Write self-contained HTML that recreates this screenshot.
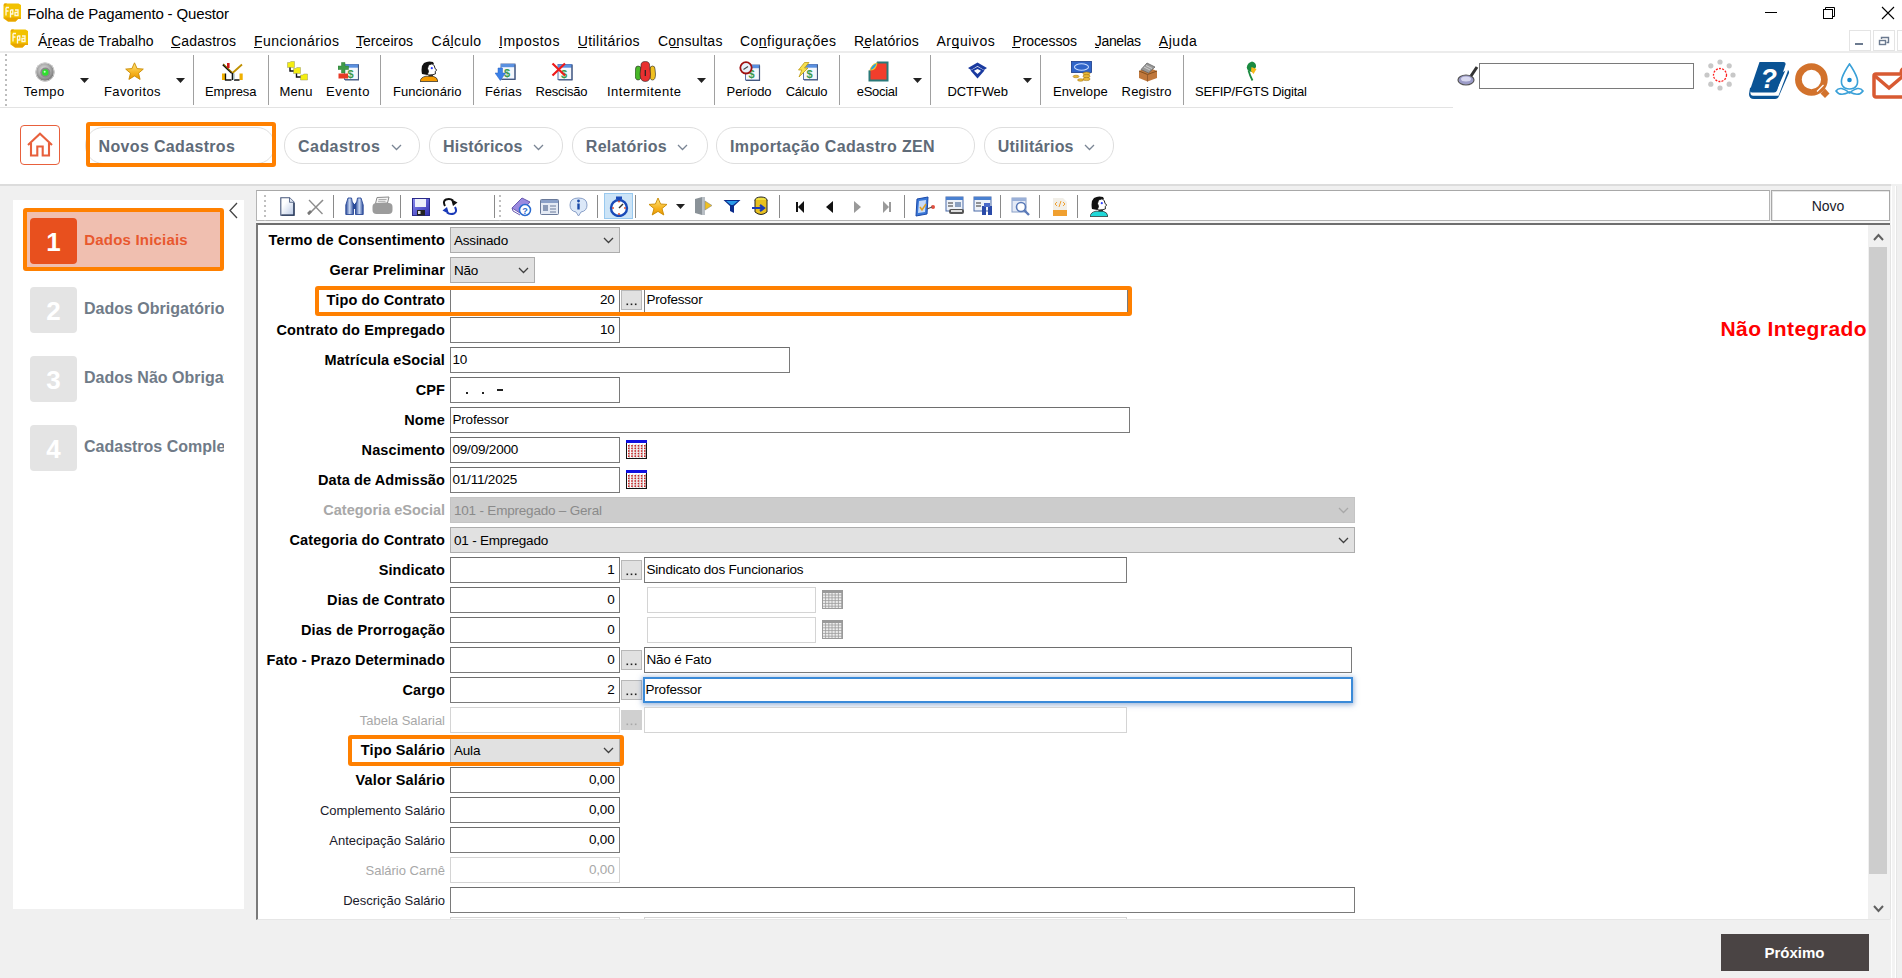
<!DOCTYPE html><html><head><meta charset="utf-8"><style>
html,body{margin:0;padding:0;width:1902px;height:978px;overflow:hidden;background:#f0f0f0}
body{position:relative;font-family:"Liberation Sans",sans-serif}
div{position:absolute;box-sizing:border-box}
svg{position:absolute}
</style></head><body>
<div style="left:0px;top:0px;width:1902px;height:978px;background:#f0f0f0"></div>
<div style="left:0px;top:0px;width:1902px;height:108px;background:#fff"></div>
<div style="left:0px;top:51px;width:1902px;height:2px;background:#ececec"></div>
<div style="left:0px;top:107px;width:1453px;height:1px;background:#e3e3e3"></div>
<div style="left:0px;top:108px;width:1902px;height:76px;background:#fff"></div>
<div style="left:0px;top:184px;width:1891px;height:2px;background:#dcdcdc"></div>
<svg style="position:absolute;left:3px;top:3px" width="19" height="19" viewBox="0 0 19 19"><path d="M1.5 0.5 H15.5 L18 2 V15.5 L15 16 L12.5 18.5 H5 L0.5 15.5 V2 Z" fill="#f2c200"/><path d="M0.5 14.5 L5 18.5 H12.5 L15 16 H18 V14.5 Z" fill="#e8a400"/><path d="M0.5 2 L1.5 0.5 H4 L2 3 Z" fill="#e8a400"/><path d="M3 4.5 V12.5 M3 4.5 H6 M3 8 H5.5 M7.5 7 V14.5 M7.5 7 H9.8 V11 H7.5 M12 7 H15 V12.5 H12 V9.5 H15" fill="none" stroke="#fff8e0" stroke-width="1.3"/></svg>
<div style="top:6.30px;font-size:15px;line-height:15px;font-weight:400;color:#000;white-space:nowrap;letter-spacing:-0.148px;left:27px;">Folha de Pagamento - Questor</div>
<div style="left:1765px;top:12px;width:12px;height:1px;background:#000"></div>
<svg style="position:absolute;left:1822px;top:6px" width="15" height="15" viewBox="0 0 15 15"><rect x="1.5" y="3.5" width="9" height="9" fill="none" stroke="#000"/><path d="M3.5 3.5 V1.5 H12.5 V10.5 H10.5" fill="none" stroke="#000"/></svg>
<svg style="position:absolute;left:1881px;top:6px" width="15" height="15" viewBox="0 0 15 15"><path d="M1 1 L13 13 M13 1 L1 13" stroke="#000" stroke-width="1.1"/></svg>
<svg style="position:absolute;left:10px;top:29px" width="19" height="19" viewBox="0 0 19 19"><path d="M1.5 0.5 H15.5 L18 2 V15.5 L15 16 L12.5 18.5 H5 L0.5 15.5 V2 Z" fill="#f2c200"/><path d="M0.5 14.5 L5 18.5 H12.5 L15 16 H18 V14.5 Z" fill="#e8a400"/><path d="M0.5 2 L1.5 0.5 H4 L2 3 Z" fill="#e8a400"/><path d="M3 4.5 V12.5 M3 4.5 H6 M3 8 H5.5 M7.5 7 V14.5 M7.5 7 H9.8 V11 H7.5 M12 7 H15 V12.5 H12 V9.5 H15" fill="none" stroke="#fff8e0" stroke-width="1.3"/></svg>
<div style="top:33.65px;font-size:14px;line-height:14px;font-weight:400;color:#000;white-space:nowrap;letter-spacing:0.071px;left:38px;">Áreas de Trabalho</div>
<div style="top:33.65px;font-size:14px;line-height:14px;font-weight:400;color:#000;white-space:nowrap;letter-spacing:0.152px;left:171px;">Cadastros</div>
<div style="top:33.65px;font-size:14px;line-height:14px;font-weight:400;color:#000;white-space:nowrap;letter-spacing:0.445px;left:254px;">Funcionários</div>
<div style="top:33.65px;font-size:14px;line-height:14px;font-weight:400;color:#000;white-space:nowrap;letter-spacing:0.029px;left:356px;">Terceiros</div>
<div style="top:33.65px;font-size:14px;line-height:14px;font-weight:400;color:#000;white-space:nowrap;letter-spacing:0.455px;left:431.6px;">Cálculo</div>
<div style="top:33.65px;font-size:14px;line-height:14px;font-weight:400;color:#000;white-space:nowrap;letter-spacing:0.517px;left:499px;">Impostos</div>
<div style="top:33.65px;font-size:14px;line-height:14px;font-weight:400;color:#000;white-space:nowrap;letter-spacing:0.435px;left:577.7px;">Utilitários</div>
<div style="top:33.65px;font-size:14px;line-height:14px;font-weight:400;color:#000;white-space:nowrap;letter-spacing:0.283px;left:657.9px;">Consultas</div>
<div style="top:33.65px;font-size:14px;line-height:14px;font-weight:400;color:#000;white-space:nowrap;letter-spacing:0.480px;left:740px;">Configurações</div>
<div style="top:33.65px;font-size:14px;line-height:14px;font-weight:400;color:#000;white-space:nowrap;letter-spacing:0.178px;left:854px;">Relatórios</div>
<div style="top:33.65px;font-size:14px;line-height:14px;font-weight:400;color:#000;white-space:nowrap;letter-spacing:0.535px;left:936.5px;">Arquivos</div>
<div style="top:33.65px;font-size:14px;line-height:14px;font-weight:400;color:#000;white-space:nowrap;letter-spacing:-0.093px;left:1012.4px;">Processos</div>
<div style="top:33.65px;font-size:14px;line-height:14px;font-weight:400;color:#000;white-space:nowrap;letter-spacing:-0.339px;left:1094.8px;">Janelas</div>
<div style="top:33.65px;font-size:14px;line-height:14px;font-weight:400;color:#000;white-space:nowrap;letter-spacing:0.551px;left:1158.8px;">Ajuda</div>
<div style="left:47px;top:47px;width:5px;height:1px;background:#000"></div>
<div style="left:171px;top:47px;width:9px;height:1px;background:#000"></div>
<div style="left:254px;top:47px;width:8px;height:1px;background:#000"></div>
<div style="left:356px;top:47px;width:6px;height:1px;background:#000"></div>
<div style="left:450px;top:47px;width:3px;height:1px;background:#000"></div>
<div style="left:499px;top:47px;width:3px;height:1px;background:#000"></div>
<div style="left:578px;top:47px;width:9px;height:1px;background:#000"></div>
<div style="left:670px;top:47px;width:9px;height:1px;background:#000"></div>
<div style="left:759px;top:47px;width:8px;height:1px;background:#000"></div>
<div style="left:863px;top:47px;width:7px;height:1px;background:#000"></div>
<div style="left:952px;top:47px;width:7px;height:1px;background:#000"></div>
<div style="left:1012px;top:47px;width:8px;height:1px;background:#000"></div>
<div style="left:1095px;top:47px;width:4px;height:1px;background:#000"></div>
<div style="left:1159px;top:47px;width:9px;height:1px;background:#000"></div>
<div style="left:1849px;top:30px;width:22px;height:21px;border:1px solid #e4e4e4;background:#fff"></div>
<div style="left:1855px;top:43px;width:8px;height:2px;background:#6b7a8f"></div>
<div style="left:1873px;top:30px;width:22px;height:21px;border:1px solid #e4e4e4;background:#fff"></div>
<svg style="position:absolute;left:1878px;top:35px" width="12" height="12" viewBox="0 0 12 12"><rect x="1.5" y="5.5" width="6" height="4" fill="none" stroke="#6b7a8f" stroke-width="1.4"/><path d="M3.5 4 V2.5 H10.5 V7.5 H8.5" fill="none" stroke="#6b7a8f" stroke-width="1.4"/></svg>
<div style="left:1897px;top:30px;width:6px;height:21px;border:1px solid #e4e4e4;background:#fff"></div>
<div style="left:5px;top:54px;width:2px;height:2px;background:#bdbdbd"></div>
<div style="left:5px;top:59px;width:2px;height:2px;background:#bdbdbd"></div>
<div style="left:5px;top:64px;width:2px;height:2px;background:#bdbdbd"></div>
<div style="left:5px;top:69px;width:2px;height:2px;background:#bdbdbd"></div>
<div style="left:5px;top:74px;width:2px;height:2px;background:#bdbdbd"></div>
<div style="left:5px;top:79px;width:2px;height:2px;background:#bdbdbd"></div>
<div style="left:5px;top:84px;width:2px;height:2px;background:#bdbdbd"></div>
<div style="left:5px;top:89px;width:2px;height:2px;background:#bdbdbd"></div>
<div style="left:5px;top:94px;width:2px;height:2px;background:#bdbdbd"></div>
<div style="left:5px;top:99px;width:2px;height:2px;background:#bdbdbd"></div>
<div style="left:5px;top:104px;width:2px;height:2px;background:#bdbdbd"></div>
<div style="left:193px;top:55px;width:1px;height:50px;background:#a0a0a0"></div>
<div style="left:268px;top:55px;width:1px;height:50px;background:#a0a0a0"></div>
<div style="left:380px;top:55px;width:1px;height:50px;background:#a0a0a0"></div>
<div style="left:473px;top:55px;width:1px;height:50px;background:#a0a0a0"></div>
<div style="left:714px;top:55px;width:1px;height:50px;background:#a0a0a0"></div>
<div style="left:839px;top:55px;width:1px;height:50px;background:#a0a0a0"></div>
<div style="left:930px;top:55px;width:1px;height:50px;background:#a0a0a0"></div>
<div style="left:1040px;top:55px;width:1px;height:50px;background:#a0a0a0"></div>
<div style="left:1183px;top:55px;width:1px;height:50px;background:#a0a0a0"></div>
<div style="top:84.80px;font-size:13px;line-height:13px;font-weight:400;color:#000;white-space:nowrap;letter-spacing:0.367px;left:23.7px;">Tempo</div>
<div style="top:84.80px;font-size:13px;line-height:13px;font-weight:400;color:#000;white-space:nowrap;letter-spacing:0.379px;left:104px;">Favoritos</div>
<div style="top:84.80px;font-size:13px;line-height:13px;font-weight:400;color:#000;white-space:nowrap;letter-spacing:-0.089px;left:205px;">Empresa</div>
<div style="top:84.80px;font-size:13px;line-height:13px;font-weight:400;color:#000;white-space:nowrap;letter-spacing:0.156px;left:279.5px;">Menu</div>
<div style="top:84.80px;font-size:13px;line-height:13px;font-weight:400;color:#000;white-space:nowrap;letter-spacing:0.603px;left:326px;">Evento</div>
<div style="top:84.80px;font-size:13px;line-height:13px;font-weight:400;color:#000;white-space:nowrap;letter-spacing:0.055px;left:393px;">Funcionário</div>
<div style="top:84.80px;font-size:13px;line-height:13px;font-weight:400;color:#000;white-space:nowrap;letter-spacing:0.115px;left:485px;">Férias</div>
<div style="top:84.80px;font-size:13px;line-height:13px;font-weight:400;color:#000;white-space:nowrap;letter-spacing:-0.212px;left:535.5px;">Rescisão</div>
<div style="top:84.80px;font-size:13px;line-height:13px;font-weight:400;color:#000;white-space:nowrap;letter-spacing:0.486px;left:607px;">Intermitente</div>
<div style="top:84.80px;font-size:13px;line-height:13px;font-weight:400;color:#000;white-space:nowrap;letter-spacing:-0.108px;left:726.6px;">Período</div>
<div style="top:84.80px;font-size:13px;line-height:13px;font-weight:400;color:#000;white-space:nowrap;letter-spacing:-0.263px;left:785.7px;">Cálculo</div>
<div style="top:84.80px;font-size:13px;line-height:13px;font-weight:400;color:#000;white-space:nowrap;letter-spacing:-0.276px;left:856.7px;">eSocial</div>
<div style="top:84.80px;font-size:13px;line-height:13px;font-weight:400;color:#000;white-space:nowrap;letter-spacing:-0.093px;left:947.4px;">DCTFWeb</div>
<div style="top:84.80px;font-size:13px;line-height:13px;font-weight:400;color:#000;white-space:nowrap;letter-spacing:0.067px;left:1053px;">Envelope</div>
<div style="top:84.80px;font-size:13px;line-height:13px;font-weight:400;color:#000;white-space:nowrap;letter-spacing:0.240px;left:1121.5px;">Registro</div>
<div style="top:84.80px;font-size:13px;line-height:13px;font-weight:400;color:#000;white-space:nowrap;letter-spacing:-0.210px;left:1195px;">SEFIP/FGTS Digital</div>
<svg style="position:absolute;left:80px;top:78px" width="10" height="6" viewBox="0 0 10 6"><path d="M0 0 H9 L4.5 5 Z" fill="#222"/></svg>
<svg style="position:absolute;left:176px;top:78px" width="10" height="6" viewBox="0 0 10 6"><path d="M0 0 H9 L4.5 5 Z" fill="#222"/></svg>
<svg style="position:absolute;left:697px;top:78px" width="10" height="6" viewBox="0 0 10 6"><path d="M0 0 H9 L4.5 5 Z" fill="#222"/></svg>
<svg style="position:absolute;left:913px;top:78px" width="10" height="6" viewBox="0 0 10 6"><path d="M0 0 H9 L4.5 5 Z" fill="#222"/></svg>
<svg style="position:absolute;left:1023px;top:78px" width="10" height="6" viewBox="0 0 10 6"><path d="M0 0 H9 L4.5 5 Z" fill="#222"/></svg>
<svg style="position:absolute;left:35px;top:62px" width="20" height="20" viewBox="0 0 20 20"><defs><radialGradient id="gr1" cx="0.45" cy="0.4" r="0.6"><stop offset="0" stop-color="#e8e8e8"/><stop offset="0.5" stop-color="#b0b0b0"/><stop offset="1" stop-color="#707070"/></radialGradient></defs><circle cx="10" cy="10" r="9.6" fill="url(#gr1)"/><circle cx="10" cy="10" r="9.2" fill="none" stroke="#d8d8d8" stroke-width="1"/><circle cx="10.3" cy="10.5" r="5" fill="#8a8a8a"/><circle cx="10.3" cy="10.5" r="3.2" fill="#30e030"/><circle cx="9.7" cy="9.8" r="1" fill="#c8ffc8"/></svg>
<svg style="position:absolute;left:125px;top:62px" width="19" height="18" viewBox="0 0 19 18"><defs><linearGradient id="stg" x1="0" y1="0" x2="0" y2="1"><stop offset="0" stop-color="#ffe680"/><stop offset="0.6" stop-color="#f6b420"/><stop offset="1" stop-color="#e89400"/></linearGradient></defs><path d="M9.5 0.8 L12.1 6.6 L18.3 7.1 L13.5 11.2 L15.1 17.4 L9.5 14 L3.9 17.4 L5.5 11.2 L0.7 7.1 L6.9 6.6 Z" fill="url(#stg)" stroke="#c88a00" stroke-width="0.9" stroke-linejoin="round"/></svg>
<svg style="position:absolute;left:222px;top:63px" width="21" height="18" viewBox="0 0 21 18"><path d="M1 1.5 L10 10" stroke="#111" stroke-width="2.2"/><path d="M1.5 1 L10 9.3" stroke="#d8a800" stroke-width="1"/><path d="M20 1.5 L10.5 10" stroke="#c09000" stroke-width="1.8"/><rect x="5" y="0" width="2.6" height="5" fill="#d01818"/><path d="M10.5 10 V17" stroke="#111" stroke-width="1.6"/><rect x="0" y="10.5" width="3.2" height="6.5" fill="#f0b000"/><rect x="17.5" y="10.5" width="3.2" height="6.5" fill="#f0b000"/><path d="M3.5 10.5 V17 H9.5 M12 17 H17.5" fill="none" stroke="#111" stroke-width="1.3"/><path d="M12 10.5 V17" stroke="#8ab0b8" stroke-width="1"/></svg>
<svg style="position:absolute;left:287px;top:61px" width="21" height="20" viewBox="0 0 21 20"><path d="M0.5 1.5 H3.0 L3.7 0.5 H7.5 V6.5 H0.5 Z" fill="#f4ee10" stroke="#9a9a60" stroke-width="0.5"/><path d="M6.5 7.5 H9.0 L9.7 6.5 H13.5 V12.5 H6.5 Z" fill="#f4ee10" stroke="#9a9a60" stroke-width="0.5"/><path d="M13.5 14 H16.0 L16.7 13 H20.5 V19 H13.5 Z" fill="#f4ee10" stroke="#9a9a60" stroke-width="0.5"/><path d="M3 6.5 V10 H6.5 M9.5 12.5 V16 H13.5" fill="none" stroke="#111" stroke-width="1.4"/></svg>
<svg style="position:absolute;left:338px;top:62px" width="21" height="19" viewBox="0 0 21 19"><g transform="translate(6,2)"><rect x="0.5" y="0.5" width="14" height="15" fill="#f4f7fc" stroke="#5a72a8" stroke-width="1"/><rect x="0.5" y="0.5" width="14" height="3.2" fill="#5a90e0"/><path d="M14.5 1 V16 H1" fill="none" stroke="#44587e" stroke-width="1.2"/><text x="3.6" y="13.8" font-size="11" font-weight="700" fill="#3a9a50" font-family="Liberation Sans">$</text></g><path d="M3.5 0.5 H7 V4 H10.5 V7.5 H7 V11 H3.5 V7.5 H0 V4 H3.5 Z" fill="#3e9a48" stroke="#2a7a32" stroke-width="0.5"/><rect x="0.5" y="11.5" width="9.5" height="5" fill="#e83a26"/></svg>
<svg style="position:absolute;left:420px;top:61px" width="18" height="21" viewBox="0 0 18 21"><path d="M2 13 Q0.5 5 4 2 Q8 -0.5 13 1 L14 3 L10 4.5 L8.5 8 L9.5 11 L7.5 14 Z" fill="#111"/><path d="M8.5 4 L12 2.8 L14.3 4.6 L15 7.5 L16.8 9 L15.2 10.5 L15.5 12.8 L12.5 13.8 L9 14.5 L7.5 13 L8.5 10.5 L7.5 7.5 Z" fill="#fff" stroke="#111" stroke-width="0.9"/><circle cx="11.8" cy="7.2" r="1.1" fill="#3040ff"/><path d="M8.5 13.5 H13 V16 H8.5 Z" fill="#333"/><path d="M0 20.5 Q0.8 16 6 15.2 H13 Q17.3 16 18 20.5 Z" fill="#f49a00" stroke="#222" stroke-width="0.7"/></svg>
<svg style="position:absolute;left:495px;top:62px" width="21" height="20" viewBox="0 0 21 20"><g transform="translate(5.5,1.5)"><rect x="0.5" y="0.5" width="14" height="15" fill="#f4f7fc" stroke="#5a72a8" stroke-width="1"/><rect x="0.5" y="0.5" width="14" height="3.2" fill="#5a90e0"/><path d="M14.5 1 V16 H1" fill="none" stroke="#44587e" stroke-width="1.2"/><text x="3.6" y="13.8" font-size="11" font-weight="700" fill="#3a9a50" font-family="Liberation Sans">$</text></g><path d="M3 6 H7.5 V11 H10.5 L5.3 18.5 L0 11 H3 Z" fill="#3a80e8" stroke="#2a60c0" stroke-width="0.5"/></svg>
<svg style="position:absolute;left:551px;top:62px" width="22" height="19" viewBox="0 0 22 19"><g transform="translate(6.5,2)"><rect x="0.5" y="0.5" width="14" height="15" fill="#f4f7fc" stroke="#5a72a8" stroke-width="1"/><rect x="0.5" y="0.5" width="14" height="3.2" fill="#5a90e0"/><path d="M14.5 1 V16 H1" fill="none" stroke="#44587e" stroke-width="1.2"/><text x="3.6" y="13.8" font-size="11" font-weight="700" fill="#3a9a50" font-family="Liberation Sans">$</text></g><path d="M1.5 1.5 L14 13.5 M14 1.5 L1.5 13.5" stroke="#ee1a1a" stroke-width="2.2"/></svg>
<svg style="position:absolute;left:635px;top:61px" width="21" height="21" viewBox="0 0 21 21"><path d="M3 5 Q6 5 6 8 L6.5 13 Q6.5 19 3 19 Q0 19 0 13 L0.5 8 Q0.5 5 3 5 Z" fill="#48b828" stroke="#222" stroke-width="0.6"/><path d="M17.5 5 Q20 5 20 8 L20.5 13 Q20.5 19 17.5 19 Q14.5 19 14.5 13 L15 8 Q15 5 17.5 5 Z" fill="#f0c020" stroke="#222" stroke-width="0.6"/><path d="M10.3 0.5 Q15 0.5 14.6 5 L15.5 13 Q15.5 20.5 10.3 20.5 Q5 20.5 5 13 L6 5 Q5.5 0.5 10.3 0.5 Z" fill="#e83030" stroke="#222" stroke-width="0.6"/><path d="M10.3 9 V15" stroke="#222" stroke-width="1.2"/></svg>
<svg style="position:absolute;left:739px;top:61px" width="22" height="20" viewBox="0 0 22 20"><g transform="translate(6,3.5)"><rect x="0.5" y="0.5" width="14" height="15" fill="#f4f7fc" stroke="#5a72a8" stroke-width="1"/><rect x="0.5" y="0.5" width="14" height="3.2" fill="#5a90e0"/><path d="M14.5 1 V16 H1" fill="none" stroke="#44587e" stroke-width="1.2"/><text x="3.6" y="13.8" font-size="11" font-weight="700" fill="#3a9a50" font-family="Liberation Sans">$</text></g><circle cx="7" cy="6.8" r="5.7" fill="#e8f0fa" stroke="#a01010" stroke-width="1.8"/><path d="M4.5 8.5 L9 5.5" stroke="#444" stroke-width="1.1"/></svg>
<svg style="position:absolute;left:797px;top:62px" width="21" height="19" viewBox="0 0 21 19"><g transform="translate(6,2)"><rect x="0.5" y="0.5" width="14" height="15" fill="#f4f7fc" stroke="#5a72a8" stroke-width="1"/><rect x="0.5" y="0.5" width="14" height="3.2" fill="#5a90e0"/><path d="M14.5 1 V16 H1" fill="none" stroke="#44587e" stroke-width="1.2"/><text x="3.6" y="13.8" font-size="11" font-weight="700" fill="#3a9a50" font-family="Liberation Sans">$</text></g><path d="M7.5 0.5 H12 L7.5 6 H11 L2 15 L4.8 8 H1.5 Z" fill="#f6e050" stroke="#b89000" stroke-width="0.7"/></svg>
<svg style="position:absolute;left:868px;top:61px" width="21" height="21" viewBox="0 0 21 21"><rect x="0.5" y="0.5" width="20" height="20" fill="#2a7a7a"/><rect x="2.5" y="2.5" width="16" height="16" fill="#f23e2c"/><path d="M0 0 H9 Q8 5 6 8 Q3 9 0 9.5 Z" fill="#fff"/><path d="M1.5 9.5 Q3 3 9.5 1.5 Q9 6 7 8 Q4.5 9.5 1.5 9.5 Z" fill="#f6c820"/><path d="M2.5 9 Q3.5 4 8.5 2.5 Q7.5 6 6 7 Q4 8.5 2.5 9 Z" fill="#2aa0e0"/></svg>
<svg style="position:absolute;left:968px;top:62px" width="20" height="17" viewBox="0 0 20 17"><path d="M9.5 0.5 L19 6 L16 8 L9.5 4 L3 8 L0 6 Z" fill="#1a3aa0"/><path d="M2.5 8.5 L9.5 4.8 L16.5 8.5 L9.5 16.5 Z" fill="#1a3aa0"/><path d="M6 8.8 L9.5 7 L13 8.8 L9.5 12 Z" fill="#fff"/></svg>
<svg style="position:absolute;left:1071px;top:61px" width="21" height="21" viewBox="0 0 21 21"><rect x="0.5" y="0.5" width="20" height="11" fill="#2f64c8" stroke="#1a3a88" stroke-width="0.8"/><ellipse cx="10.5" cy="6" rx="7" ry="3.2" fill="none" stroke="#c8dcff" stroke-width="1.1"/><ellipse cx="15.5" cy="12.5" rx="3.6" ry="1.6" fill="#e8b838" stroke="#9a7010" stroke-width="0.5"/><ellipse cx="15.5" cy="15.2" rx="3.6" ry="1.6" fill="#e8b838" stroke="#9a7010" stroke-width="0.5"/><ellipse cx="15.5" cy="18" rx="3.6" ry="1.6" fill="#e8b838" stroke="#9a7010" stroke-width="0.5"/><ellipse cx="5" cy="15.5" rx="3" ry="1.3" fill="#e8b838" stroke="#9a7010" stroke-width="0.5"/><ellipse cx="9.5" cy="19" rx="3" ry="1.3" fill="#e8b838" stroke="#9a7010" stroke-width="0.5"/></svg>
<svg style="position:absolute;left:1138px;top:62px" width="20" height="20" viewBox="0 0 20 20"><path d="M1 9 L9.5 5 L19 9 V16 L9.5 19.5 L1 16 Z" fill="#c0783c"/><path d="M1 9 L9.5 12.5 L19 9" fill="none" stroke="#7a4a1a" stroke-width="0.9"/><path d="M9.5 12.5 V19.5" stroke="#8a5428" stroke-width="0.8"/><path d="M3 7.5 L9 1 L17 5 L10.5 11 Z" fill="#9a9a9a" stroke="#5a5a5a" stroke-width="0.7"/><path d="M6 5 L12 8 M8 3.5 L14 6.5" stroke="#ddd" stroke-width="0.8"/></svg>
<svg style="position:absolute;left:1246px;top:61px" width="11" height="20" viewBox="0 0 11 20"><path d="M6 0.5 Q10.5 1.5 10 6 L8 9 L5.5 11 Q1 10 0.8 6.5 Q1 2 6 0.5 Z" fill="#1a8a40"/><path d="M5.5 6 L10.5 8 L7.5 13 L5 10 Z" fill="#f6b818"/><path d="M2.5 9.5 Q4 15 6.5 19.5" stroke="#1a8a40" stroke-width="1.8" fill="none"/></svg>
<svg style="position:absolute;left:1456px;top:64px" width="24" height="24" viewBox="0 0 24 24"><ellipse cx="10" cy="16" rx="8" ry="5" fill="#9c9cc8" stroke="#555" stroke-width="1.2"/><ellipse cx="10" cy="15" rx="5" ry="2.5" fill="#d8d8f0"/><path d="M15 12 L21 3" stroke="#333" stroke-width="3"/></svg>
<div style="left:1479px;top:63px;width:215px;height:26px;border:1px solid #7a7a7a;background:#fff"></div>
<svg style="position:absolute;left:1704px;top:59px" width="32" height="32" viewBox="0 0 32 32"><circle cx="29.0" cy="16.0" r="2.6" fill="#c8c8c8"/><circle cx="25.2" cy="25.2" r="2.6" fill="#c8c8c8"/><circle cx="16.0" cy="29.0" r="2.6" fill="#c8c8c8"/><circle cx="6.8" cy="25.2" r="2.6" fill="#c8c8c8"/><circle cx="3.0" cy="16.0" r="2.6" fill="#c8c8c8"/><circle cx="6.8" cy="6.8" r="2.6" fill="#c8c8c8"/><circle cx="16.0" cy="3.0" r="2.6" fill="#c8c8c8"/><circle cx="25.2" cy="6.8" r="2.6" fill="#c8c8c8"/><circle cx="16" cy="16" r="6.5" fill="none" stroke="#ff2020" stroke-width="1.3" stroke-dasharray="2 1.2"/></svg>
<svg style="position:absolute;left:1748px;top:61px" width="42" height="39" viewBox="0 0 42 39"><path d="M2 27 L1 33 Q1 38 6 38 H27 Q30 38 31 35 L41 12 Q41.5 9 39 9 Z" fill="#0a5394"/><path d="M2.5 29.5 H28.5 L38 8 L40 9.5 L30.5 34.8 H5 Q3 34.8 2.5 33 Z" fill="#fff"/><path d="M11.5 1 H35.5 Q38 1 37.5 3.5 L29 29.5 Q28.3 31.5 26 31.5 H4 Q1.5 31.5 2 29 Z" fill="#0a5394"/><text x="12.5" y="27" font-size="27" font-weight="700" font-style="italic" fill="#fff" font-family="Liberation Sans">?</text></svg>
<svg style="position:absolute;left:1794px;top:62px" width="37" height="36" viewBox="0 0 37 36"><circle cx="17.4" cy="17.5" r="13" fill="none" stroke="#d2722c" stroke-width="6.7"/><path d="M23 29.5 L29.5 23" stroke="#fff" stroke-width="1.3"/><path d="M31 26.5 L35.5 31.5 L31 36 L26.5 31.5 Z" fill="#d2722c"/></svg>
<svg style="position:absolute;left:1834px;top:63px" width="31" height="35" viewBox="0 0 31 35"><path d="M15.5 1 Q10 9 8 15 Q6 22 11 25 Q15.5 27 20 25 Q25 22 23 15 Q21 9 15.5 1 Z" fill="none" stroke="#39a0d8" stroke-width="1.6"/><circle cx="15.5" cy="17" r="2.3" fill="#1a8ad0"/><path d="M2 28 Q6 22 15.5 30 Q25 22 29 28 Q25 34 15.5 29 Q6 34 2 28 Z" fill="none" stroke="#39a0d8" stroke-width="1.6"/></svg>
<svg style="position:absolute;left:1872px;top:65px" width="30" height="34" viewBox="0 0 30 34"><rect x="2" y="9" width="32" height="23" rx="2" fill="none" stroke="#d85a32" stroke-width="3.5"/><path d="M3 11 L17 23 L31 11" fill="none" stroke="#d85a32" stroke-width="3.5"/><circle cx="33" cy="7" r="5.5" fill="#d85a32"/></svg>
<div style="left:20px;top:125px;width:40px;height:40px;border:1px solid #e8603c;border-radius:4px;background:#fff"></div>
<svg style="position:absolute;left:27px;top:132px" width="26" height="26" viewBox="0 0 26 26"><path d="M1 13 L13 1.8 L25 13" fill="none" stroke="#e8603c" stroke-width="2.1"/><path d="M4 11 V23.5 H10.3 V14.5 H15.7 V23.5 H22 V11" fill="none" stroke="#e8603c" stroke-width="2.1"/></svg>
<div style="left:85px;top:127px;width:190px;height:37px;border:1px solid #dedede;border-radius:18px;background:#fff"></div>
<div style="top:138.86px;font-size:16px;line-height:16px;font-weight:700;color:#5f6b78;white-space:nowrap;letter-spacing:0.335px;left:98.6px;">Novos Cadastros</div>
<div style="left:284px;top:127px;width:136px;height:37px;border:1px solid #dedede;border-radius:18px;background:#fff"></div>
<div style="top:138.86px;font-size:16px;line-height:16px;font-weight:700;color:#5f6b78;white-space:nowrap;letter-spacing:0.461px;left:298px;">Cadastros</div>
<svg style="position:absolute;left:391px;top:144px" width="11" height="7" viewBox="0 0 11 7"><path d="M1 1 L5.5 5.5 L10 1" fill="none" stroke="#7a8594" stroke-width="1.3"/></svg>
<div style="left:429px;top:127px;width:134px;height:37px;border:1px solid #dedede;border-radius:18px;background:#fff"></div>
<div style="top:138.86px;font-size:16px;line-height:16px;font-weight:700;color:#5f6b78;white-space:nowrap;letter-spacing:0.121px;left:443px;">Históricos</div>
<svg style="position:absolute;left:533px;top:144px" width="11" height="7" viewBox="0 0 11 7"><path d="M1 1 L5.5 5.5 L10 1" fill="none" stroke="#7a8594" stroke-width="1.3"/></svg>
<div style="left:572px;top:127px;width:136px;height:37px;border:1px solid #dedede;border-radius:18px;background:#fff"></div>
<div style="top:138.86px;font-size:16px;line-height:16px;font-weight:700;color:#5f6b78;white-space:nowrap;letter-spacing:0.299px;left:585.8px;">Relatórios</div>
<svg style="position:absolute;left:677px;top:144px" width="11" height="7" viewBox="0 0 11 7"><path d="M1 1 L5.5 5.5 L10 1" fill="none" stroke="#7a8594" stroke-width="1.3"/></svg>
<div style="left:716px;top:127px;width:259px;height:37px;border:1px solid #dedede;border-radius:18px;background:#fff"></div>
<div style="top:138.86px;font-size:16px;line-height:16px;font-weight:700;color:#5f6b78;white-space:nowrap;letter-spacing:0.371px;left:730px;">Importação Cadastro ZEN</div>
<div style="left:984px;top:127px;width:130px;height:37px;border:1px solid #dedede;border-radius:18px;background:#fff"></div>
<div style="top:138.86px;font-size:16px;line-height:16px;font-weight:700;color:#5f6b78;white-space:nowrap;letter-spacing:0.204px;left:997.7px;">Utilitários</div>
<svg style="position:absolute;left:1084px;top:144px" width="11" height="7" viewBox="0 0 11 7"><path d="M1 1 L5.5 5.5 L10 1" fill="none" stroke="#7a8594" stroke-width="1.3"/></svg>
<div style="left:86px;top:122px;width:190px;height:45px;border:4px solid #ff8000;border-radius:3px"></div>
<div style="left:13px;top:200px;width:231px;height:709px;background:#fff"></div>
<div style="left:23px;top:208px;width:201px;height:63px;background:#f0bfb0;border:4px solid #ff8000;border-radius:3px"></div>
<div style="left:30px;top:218px;width:47px;height:46px;background:#e8501e;border-radius:4px"></div>
<div style="top:228.69px;font-size:26px;line-height:26px;font-weight:700;color:#fff;white-space:nowrap;left:-446.5px;width:1000px;text-align:center;">1</div>
<div style="top:232.10px;font-size:15px;line-height:15px;font-weight:700;color:#e8582e;white-space:nowrap;letter-spacing:0.202px;left:84.2px;">Dados Iniciais</div>
<svg style="position:absolute;left:228px;top:202px" width="11" height="17" viewBox="0 0 11 17"><path d="M9 1 L2 8.5 L9 16" fill="none" stroke="#444" stroke-width="1.3"/></svg>
<div style="left:30px;top:287px;width:47px;height:46px;background:#e4e4e4;border-radius:4px"></div>
<div style="top:297.69px;font-size:26px;line-height:26px;font-weight:700;color:#fff;white-space:nowrap;left:-446.5px;width:1000px;text-align:center;">2</div>
<div style="left:84px;top:287px;width:140px;height:46px;overflow:hidden"><div style="left:0;top:13.86px;font-size:16px;line-height:16px;font-weight:700;color:#707b88;white-space:nowrap">Dados Obrigatórios</div></div>
<div style="left:30px;top:356px;width:47px;height:46px;background:#e4e4e4;border-radius:4px"></div>
<div style="top:366.69px;font-size:26px;line-height:26px;font-weight:700;color:#fff;white-space:nowrap;left:-446.5px;width:1000px;text-align:center;">3</div>
<div style="left:84px;top:356px;width:140px;height:46px;overflow:hidden"><div style="left:0;top:13.86px;font-size:16px;line-height:16px;font-weight:700;color:#707b88;white-space:nowrap">Dados Não Obrigatórios</div></div>
<div style="left:30px;top:425px;width:47px;height:46px;background:#e4e4e4;border-radius:4px"></div>
<div style="top:435.69px;font-size:26px;line-height:26px;font-weight:700;color:#fff;white-space:nowrap;left:-446.5px;width:1000px;text-align:center;">4</div>
<div style="left:84px;top:425px;width:140px;height:46px;overflow:hidden"><div style="left:0;top:13.86px;font-size:16px;line-height:16px;font-weight:700;color:#707b88;white-space:nowrap">Cadastros Complementares</div></div>
<div style="left:256px;top:190px;width:1514px;height:31px;border:1px solid #b4b4b4;border-top-color:#a8a8a8;background:#fff"></div>
<div style="left:1771px;top:190px;width:119px;height:31px;border:1px solid #a8a8a8;box-shadow:inset 1px 1px 0 #e6e6e6;background:#fff"></div>
<div style="top:198.85px;font-size:14px;line-height:14px;font-weight:400;color:#1a1a2a;white-space:nowrap;left:1328px;width:1000px;text-align:center;">Novo</div>
<div style="left:264px;top:195px;width:2px;height:2px;background:#c0c0c0"></div>
<div style="left:499px;top:195px;width:2px;height:2px;background:#c0c0c0"></div>
<div style="left:264px;top:200px;width:2px;height:2px;background:#c0c0c0"></div>
<div style="left:499px;top:200px;width:2px;height:2px;background:#c0c0c0"></div>
<div style="left:264px;top:205px;width:2px;height:2px;background:#c0c0c0"></div>
<div style="left:499px;top:205px;width:2px;height:2px;background:#c0c0c0"></div>
<div style="left:264px;top:210px;width:2px;height:2px;background:#c0c0c0"></div>
<div style="left:499px;top:210px;width:2px;height:2px;background:#c0c0c0"></div>
<div style="left:264px;top:215px;width:2px;height:2px;background:#c0c0c0"></div>
<div style="left:499px;top:215px;width:2px;height:2px;background:#c0c0c0"></div>
<div style="left:264px;top:220px;width:2px;height:2px;background:#c0c0c0"></div>
<div style="left:499px;top:220px;width:2px;height:2px;background:#c0c0c0"></div>
<div style="left:333px;top:195px;width:1px;height:23px;background:#8a8a8a"></div>
<div style="left:400px;top:195px;width:1px;height:23px;background:#8a8a8a"></div>
<div style="left:494px;top:195px;width:1px;height:23px;background:#8a8a8a"></div>
<div style="left:597px;top:195px;width:1px;height:23px;background:#8a8a8a"></div>
<div style="left:635px;top:195px;width:1px;height:23px;background:#8a8a8a"></div>
<div style="left:779px;top:195px;width:1px;height:23px;background:#8a8a8a"></div>
<div style="left:904px;top:195px;width:1px;height:23px;background:#8a8a8a"></div>
<div style="left:1000px;top:195px;width:1px;height:23px;background:#8a8a8a"></div>
<div style="left:1039px;top:195px;width:1px;height:23px;background:#8a8a8a"></div>
<div style="left:1077px;top:195px;width:1px;height:23px;background:#8a8a8a"></div>
<svg style="position:absolute;left:280px;top:197px" width="15" height="19" viewBox="0 0 15 19"><defs><linearGradient id="ndg" x1="0" y1="0" x2="1" y2="1"><stop offset="0.3" stop-color="#ffffff"/><stop offset="1" stop-color="#b8c8e4"/></linearGradient></defs><path d="M0.8 0.8 H9.5 L14 5.3 V18.2 H0.8 Z" fill="url(#ndg)" stroke="#44557a" stroke-width="1.1"/><path d="M9.5 0.8 V5.3 H14" fill="#dfe6f2" stroke="#44557a" stroke-width="0.8"/><path d="M14 6 V18.2 H1.5" fill="none" stroke="#2a3a5a" stroke-width="1.3"/></svg>
<svg style="position:absolute;left:307px;top:198px" width="18" height="18" viewBox="0 0 18 18"><path d="M1.5 16.5 L16 2" stroke="#8c8c8c" stroke-width="1.6"/><path d="M2 2 L15.5 16" stroke="#8c8c8c" stroke-width="1.3"/><path d="M1 16 L4 13" stroke="#777" stroke-width="2.6"/></svg>
<svg style="position:absolute;left:345px;top:197px" width="19" height="18" viewBox="0 0 19 18"><defs><linearGradient id="bng" x1="0" y1="0" x2="1" y2="0"><stop offset="0" stop-color="#2a4a98"/><stop offset="0.5" stop-color="#c8d8f4"/><stop offset="1" stop-color="#2a4a98"/></linearGradient></defs><path d="M3 1 H6.5 L7.5 6 H8.5 V17.5 H0.8 V8 Z" fill="url(#bng)" stroke="#2a4a98" stroke-width="0.9"/><path d="M12.5 1 H16 L18.2 8 V17.5 H10.5 V6 H11.5 Z" fill="url(#bng)" stroke="#2a4a98" stroke-width="0.9"/><rect x="8" y="7" width="3" height="5" fill="#2a4a98"/></svg>
<svg style="position:absolute;left:372px;top:196px" width="21" height="19" viewBox="0 0 21 19"><path d="M5 1.5 L17 1 L15.5 7 L3.5 7.5 Z" fill="#f4f4f4" stroke="#8a8a8a" stroke-width="1"/><path d="M6.5 3.5 H14.5 M6 5.3 H13.5" stroke="#9a9a9a" stroke-width="0.8"/><rect x="0.5" y="7" width="20" height="11" rx="4" fill="#9c9c9c"/></svg>
<svg style="position:absolute;left:412px;top:198px" width="18" height="18" viewBox="0 0 18 18"><defs><linearGradient id="svg1" x1="0" y1="0" x2="1" y2="1"><stop offset="0" stop-color="#8a8af0"/><stop offset="1" stop-color="#3030b0"/></linearGradient></defs><rect x="0.5" y="0.5" width="17" height="17" fill="url(#svg1)" stroke="#2a2a8a" stroke-width="1"/><rect x="3" y="1" width="11" height="8" fill="#eef0fa"/><rect x="5" y="12" width="8" height="5.5" fill="#222"/><rect x="6" y="13" width="2.5" height="3" fill="#ddd"/></svg>
<svg style="position:absolute;left:441px;top:197px" width="18" height="19" viewBox="0 0 18 19"><path d="M4 9 Q1.5 4 5 2.5 Q9 1 12 3.5" fill="none" stroke="#111" stroke-width="2"/><path d="M10 2 L16.5 5.5 L12 9 Z" fill="#111"/><path d="M14 10 Q16.5 15 13 16.5 Q9 18 6 15.5" fill="none" stroke="#1a3ab8" stroke-width="2"/><path d="M8 17 L1.5 13.5 L6 10 Z" fill="#1a3ab8"/></svg>
<svg style="position:absolute;left:510px;top:196px" width="22" height="21" viewBox="0 0 22 21"><path d="M2 12 L12 2 L20 6 L10 17 Z" fill="#9a8ae0" stroke="#6a5ab0" stroke-width="1"/><path d="M2 12 L3 15 L10 19" fill="none" stroke="#6a5ab0" stroke-width="1"/><circle cx="15" cy="14" r="5.5" fill="#fff" stroke="#2a6ad0" stroke-width="1.5"/><text x="12.3" y="17.5" font-size="9" font-weight="700" fill="#2a6ad0" font-family="Liberation Sans">?</text></svg>
<svg style="position:absolute;left:540px;top:199px" width="19" height="16" viewBox="0 0 19 16"><rect x="0.5" y="0.5" width="18" height="15" rx="1" fill="#e4eaf4" stroke="#6a7a9a" stroke-width="1"/><rect x="1" y="1" width="17" height="3" fill="#8aa0c8"/><rect x="3" y="6" width="5" height="6" fill="#8a9ab8"/><path d="M10 7 H16 M10 10 H16 M10 13 H16" stroke="#6a7a9a" stroke-width="1.2"/></svg>
<svg style="position:absolute;left:569px;top:197px" width="19" height="20" viewBox="0 0 19 20"><path d="M9.5 1 Q18 1 18 8 Q18 14 12 15 L9.5 19 L7 15 Q1 14 1 8 Q1 1 9.5 1 Z" fill="#dce8f8" stroke="#8aa0c8" stroke-width="1"/><rect x="8.3" y="6.5" width="2.4" height="6" fill="#1a4aa8"/><circle cx="9.5" cy="4" r="1.4" fill="#1a4aa8"/></svg>
<div style="left:604px;top:193px;width:29px;height:26px;background:#cce4f7;border:1px solid #99c9ef"></div>
<svg style="position:absolute;left:609px;top:196px" width="20" height="21" viewBox="0 0 20 21"><rect x="7" y="0.5" width="6" height="3" fill="#1a4ab8"/><circle cx="10" cy="12" r="8" fill="#fff" stroke="#1a4ab8" stroke-width="2.4"/><path d="M10 12 L14 8" stroke="#333" stroke-width="1.4"/><circle cx="10" cy="5.5" r="0.9" fill="#e04020"/><circle cx="4" cy="12" r="0.9" fill="#e04020"/><circle cx="16" cy="12" r="0.9" fill="#e04020"/><circle cx="10" cy="18" r="0.9" fill="#e04020"/></svg>
<svg style="position:absolute;left:648px;top:197px" width="20" height="19" viewBox="0 0 20 19"><defs><linearGradient id="stg2" x1="0" y1="0" x2="0" y2="1"><stop offset="0" stop-color="#ffe680"/><stop offset="0.6" stop-color="#f6b420"/><stop offset="1" stop-color="#e89400"/></linearGradient></defs><path d="M10 1 L12.6 7 L19 7.4 L14 11.6 L15.8 18 L10 14.4 L4.2 18 L6 11.6 L1 7.4 L7.4 7 Z" fill="url(#stg2)" stroke="#c88a00" stroke-width="0.9" stroke-linejoin="round"/></svg>
<svg style="position:absolute;left:676px;top:204px" width="10" height="6" viewBox="0 0 10 6"><path d="M0 0 H9 L4.5 5 Z" fill="#222"/></svg>
<svg style="position:absolute;left:693px;top:196px" width="20" height="20" viewBox="0 0 20 20"><path d="M2 3 L9 1 V19 L2 17 Z" fill="#8a9298"/><path d="M9 1 H12 V19 H9" fill="#b8bec4"/><path d="M12 5 L19 9.5 L12 14 Z" fill="#f0c020" stroke="#888" stroke-width="0.6"/></svg>
<svg style="position:absolute;left:723px;top:199px" width="18" height="15" viewBox="0 0 18 15"><path d="M0.5 1 H17.5 L11 7 V14 L7 12 V7 Z" fill="#0a2a8a"/><path d="M3 2 H15 L10 6 H8 Z" fill="#2a9ae8"/></svg>
<svg style="position:absolute;left:751px;top:196px" width="20" height="21" viewBox="0 0 20 21"><ellipse cx="10" cy="4" rx="6" ry="3" fill="#f0e040" stroke="#222" stroke-width="1"/><path d="M4 4 V16 Q10 21 16 16 V4" fill="#e8c020" stroke="#222" stroke-width="1"/><path d="M1 12 H12 M9 9 L13 12 L9 15" fill="none" stroke="#1a3ab8" stroke-width="2.2"/></svg>
<svg style="position:absolute;left:796px;top:201px" width="9" height="12" viewBox="0 0 9 12"><rect x="0" y="1" width="2" height="10" fill="#111"/><path d="M8 0 V12 L2 6 Z" fill="#111"/></svg>
<svg style="position:absolute;left:825px;top:201px" width="9" height="12" viewBox="0 0 9 12"><path d="M8 0 V12 L1 6 Z" fill="#111"/></svg>
<svg style="position:absolute;left:854px;top:201px" width="9" height="12" viewBox="0 0 9 12"><path d="M0 0 V12 L7 6 Z" fill="#9a9a9a"/></svg>
<svg style="position:absolute;left:883px;top:201px" width="9" height="12" viewBox="0 0 9 12"><path d="M0 0 V12 L6 6 Z" fill="#9a9a9a"/><rect x="6" y="1" width="2" height="10" fill="#9a9a9a"/></svg>
<svg style="position:absolute;left:914px;top:196px" width="22" height="21" viewBox="0 0 22 21"><path d="M3 3 L14 1 L13 18 L2 20 Z" fill="#3a78d8" stroke="#1a48a8" stroke-width="1"/><path d="M5 5 L12 4 L11 16 L4 17 Z" fill="#c8dcf8"/><path d="M6 11 L8 14 L12 8" fill="none" stroke="#e0a020" stroke-width="1.5"/><circle cx="19" cy="11" r="2" fill="#e05040"/><path d="M13 13 L18 11" stroke="#555" stroke-width="1.2"/></svg>
<svg style="position:absolute;left:945px;top:196px" width="20" height="21" viewBox="0 0 20 21"><rect x="1" y="1" width="17" height="14" fill="#eef2f8" stroke="#4a6aa8" stroke-width="1"/><rect x="1" y="1" width="17" height="3" fill="#4a80d0"/><path d="M3 7 H8 M3 10 H8" stroke="#333" stroke-width="1"/><rect x="10" y="6" width="6" height="5" fill="#8aa0c0"/><rect x="4" y="13" width="15" height="5" rx="2" fill="#555"/><rect x="6" y="14" width="11" height="2" fill="#ddd"/></svg>
<svg style="position:absolute;left:973px;top:196px" width="21" height="21" viewBox="0 0 21 21"><rect x="1" y="1" width="17" height="14" fill="#eef2f8" stroke="#4a6aa8" stroke-width="1"/><rect x="1" y="1" width="17" height="3" fill="#4a80d0"/><path d="M3 7 H8 M3 10 H8" stroke="#333" stroke-width="1"/><rect x="9" y="10" width="4" height="9" fill="#2a4aa8"/><rect x="15" y="10" width="4" height="9" fill="#2a4aa8"/><rect x="11" y="7" width="6" height="4" fill="#4a6ac8"/></svg>
<svg style="position:absolute;left:1011px;top:197px" width="19" height="19" viewBox="0 0 19 19"><rect x="1" y="1" width="14" height="14" fill="#e4eaf6" stroke="#8aa0c8" stroke-width="1"/><rect x="1" y="1" width="14" height="3" fill="#9ab0d8"/><circle cx="10" cy="10" r="4.5" fill="#fff" stroke="#5a7ab8" stroke-width="1.6"/><path d="M13 13 L18 18" stroke="#5a7ab8" stroke-width="2.4"/></svg>
<svg style="position:absolute;left:1052px;top:197px" width="16" height="20" viewBox="0 0 16 20"><path d="M1 1 H11 L15 5 V19 H1 Z" fill="#f2efe8"/><rect x="1" y="13" width="14" height="6" fill="#f0a030"/><path d="M5 9 L3 7 L5 5 M11 5 L13 7 L11 9 M9 4 L7 10" fill="none" stroke="#f0a030" stroke-width="1"/></svg>
<svg style="position:absolute;left:1090px;top:196px" width="18" height="21" viewBox="0 0 18 21"><path d="M2 13 Q0.5 5 4 2 Q8 -0.5 13 1 L14 3 L10 4.5 L8.5 8 L9.5 11 L7.5 14 Z" fill="#111"/><path d="M8.5 4 L12 2.8 L14.3 4.6 L15 7.5 L16.8 9 L15.2 10.5 L15.5 12.8 L12.5 13.8 L9 14.5 L7.5 13 L8.5 10.5 L7.5 7.5 Z" fill="#fff" stroke="#111" stroke-width="0.9"/><circle cx="11.8" cy="7.2" r="1.1" fill="#3040ff"/><path d="M8.5 13.5 H13 V16 H8.5 Z" fill="#333"/><path d="M0 20.5 Q0.8 16 6 15.2 H13 Q17.3 16 18 20.5 Z" fill="#20d8d8" stroke="#222" stroke-width="0.7"/></svg>
<div style="left:256px;top:223px;width:1634px;height:697px;background:#fff;border-top:2px solid #6e6e6e;border-left:2px solid #7a7a7a;border-bottom:1px solid #e6e6e6"></div>
<div style="left:256px;top:221px;width:1634px;height:2px;background:#f6f6f6"></div>
<div style="left:1868px;top:225px;width:22px;height:694px;background:#f0f0f0"></div>
<div style="left:1869px;top:247px;width:18px;height:627px;background:#cdcdcd"></div>
<svg style="position:absolute;left:1873px;top:233px" width="11" height="8" viewBox="0 0 11 8"><path d="M1 7 L5.5 2 L10 7" fill="none" stroke="#606060" stroke-width="2"/></svg>
<svg style="position:absolute;left:1873px;top:905px" width="11" height="8" viewBox="0 0 11 8"><path d="M1 1 L5.5 6 L10 1" fill="none" stroke="#606060" stroke-width="2"/></svg>
<div style="left:1890px;top:225px;width:1px;height:694px;background:#e4e4e4"></div>
<div style="left:1891px;top:186px;width:1px;height:792px;background:#fff"></div>
<div style="left:1892px;top:186px;width:3px;height:792px;background:#f3f3f3"></div>
<div style="left:1895px;top:186px;width:1px;height:792px;background:#fff"></div>
<div style="left:1896px;top:186px;width:1px;height:792px;background:#e6e6e6"></div>
<div style="top:317.72px;font-size:21px;line-height:21px;font-weight:700;color:#ff0000;white-space:nowrap;letter-spacing:0.404px;left:1720.5px;">Não Integrado</div>
<div style="left:1721px;top:934px;width:148px;height:37px;background:#4a4444"></div>
<div style="top:945.40px;font-size:15px;line-height:15px;font-weight:700;color:#fff;white-space:nowrap;left:1294.5px;width:1000px;text-align:center;">Próximo</div>
<div style="top:233.13px;font-size:14.5px;line-height:14.5px;font-weight:700;color:#000;white-space:nowrap;left:-555px;width:1000.00px;text-align:right;letter-spacing:0.12px">Termo de Consentimento</div>
<div style="left:450px;top:227px;width:170px;height:26px;border:1px solid #adadad;background:#e1e1e1"></div>
<div style="top:233.87px;font-size:13.5px;line-height:13.5px;font-weight:400;color:#000;white-space:nowrap;left:454px;letter-spacing:-0.2px">Assinado</div>
<svg style="position:absolute;left:603px;top:237px" width="12" height="8" viewBox="0 0 12 8"><path d="M1 1 L5.5 5.5 L10 1" fill="none" stroke="#404040" stroke-width="1.3"/></svg>
<div style="top:263.13px;font-size:14.5px;line-height:14.5px;font-weight:700;color:#000;white-space:nowrap;left:-555px;width:1000.00px;text-align:right;letter-spacing:0.12px">Gerar Preliminar</div>
<div style="left:450px;top:257px;width:85px;height:26px;border:1px solid #adadad;background:#e1e1e1"></div>
<div style="top:263.87px;font-size:13.5px;line-height:13.5px;font-weight:400;color:#000;white-space:nowrap;left:454px;letter-spacing:-0.2px">Não</div>
<svg style="position:absolute;left:518px;top:267px" width="12" height="8" viewBox="0 0 12 8"><path d="M1 1 L5.5 5.5 L10 1" fill="none" stroke="#404040" stroke-width="1.3"/></svg>
<div style="top:293.13px;font-size:14.5px;line-height:14.5px;font-weight:700;color:#000;white-space:nowrap;left:-555px;width:1000.00px;text-align:right;letter-spacing:0.12px">Tipo do Contrato</div>
<div style="left:450px;top:287px;width:170px;height:26px;border:1px solid #7a7a7a;background:#fff;border-top-color:#6e6e6e;"></div>
<div style="top:292.77px;font-size:13.5px;line-height:13.5px;font-weight:400;color:#000;white-space:nowrap;left:-385.5px;width:1000.00px;text-align:right;letter-spacing:-0.2px">20</div>
<div style="left:621px;top:290px;width:21px;height:20px;border:1px solid #b8b8b8;background:#e1e1e1"></div>
<svg style="position:absolute;left:623px;top:302px" width="17" height="4" viewBox="0 0 17 4"><rect x="3.5" y="1.5" width="1.6" height="1.6" fill="#222"/><rect x="7.7" y="1.5" width="1.6" height="1.6" fill="#222"/><rect x="11.9" y="1.5" width="1.6" height="1.6" fill="#222"/></svg>
<div style="left:644px;top:287px;width:484px;height:26px;border:1px solid #7a7a7a;background:#fff;border-top-color:#6e6e6e;"></div>
<div style="top:292.77px;font-size:13.5px;line-height:13.5px;font-weight:400;color:#000;white-space:nowrap;left:646.5px;letter-spacing:-0.2px">Professor</div>
<div style="top:323.13px;font-size:14.5px;line-height:14.5px;font-weight:700;color:#000;white-space:nowrap;left:-555px;width:1000.00px;text-align:right;letter-spacing:0.12px">Contrato do Empregado</div>
<div style="left:450px;top:317px;width:170px;height:26px;border:1px solid #7a7a7a;background:#fff;border-top-color:#6e6e6e;"></div>
<div style="top:322.77px;font-size:13.5px;line-height:13.5px;font-weight:400;color:#000;white-space:nowrap;left:-385.5px;width:1000.00px;text-align:right;letter-spacing:-0.2px">10</div>
<div style="top:353.13px;font-size:14.5px;line-height:14.5px;font-weight:700;color:#000;white-space:nowrap;left:-555px;width:1000.00px;text-align:right;letter-spacing:0.12px">Matrícula eSocial</div>
<div style="left:450px;top:347px;width:340px;height:26px;border:1px solid #7a7a7a;background:#fff;border-top-color:#6e6e6e;"></div>
<div style="top:352.77px;font-size:13.5px;line-height:13.5px;font-weight:400;color:#000;white-space:nowrap;left:452.5px;letter-spacing:-0.2px">10</div>
<div style="top:383.13px;font-size:14.5px;line-height:14.5px;font-weight:700;color:#000;white-space:nowrap;left:-555px;width:1000.00px;text-align:right;letter-spacing:0.12px">CPF</div>
<div style="left:450px;top:377px;width:170px;height:26px;border:1px solid #7a7a7a;background:#fff;border-top-color:#6e6e6e;"></div>
<div style="left:466px;top:392px;width:2px;height:2px;background:#222"></div>
<div style="left:482px;top:392px;width:2px;height:2px;background:#222"></div>
<div style="left:497px;top:389px;width:6px;height:1.5px;background:#222"></div>
<div style="top:413.13px;font-size:14.5px;line-height:14.5px;font-weight:700;color:#000;white-space:nowrap;left:-555px;width:1000.00px;text-align:right;letter-spacing:0.12px">Nome</div>
<div style="left:450px;top:407px;width:680px;height:26px;border:1px solid #7a7a7a;background:#fff;border-top-color:#6e6e6e;"></div>
<div style="top:412.77px;font-size:13.5px;line-height:13.5px;font-weight:400;color:#000;white-space:nowrap;left:452.5px;letter-spacing:-0.2px">Professor</div>
<div style="top:443.13px;font-size:14.5px;line-height:14.5px;font-weight:700;color:#000;white-space:nowrap;left:-555px;width:1000.00px;text-align:right;letter-spacing:0.12px">Nascimento</div>
<div style="left:450px;top:437px;width:170px;height:26px;border:1px solid #7a7a7a;background:#fff;border-top-color:#6e6e6e;"></div>
<div style="top:442.77px;font-size:13.5px;line-height:13.5px;font-weight:400;color:#000;white-space:nowrap;left:452.5px;letter-spacing:-0.2px">09/09/2000</div>
<svg style="position:absolute;left:626px;top:440px" width="21" height="19" viewBox="0 0 21 19"><rect x="0.5" y="0.5" width="20" height="18" fill="#fff" stroke="#111" stroke-width="1"/><rect x="0" y="0" width="21" height="3" fill="#1010e0"/><rect x="2.0" y="5.0" width="1.6" height="1.6" fill="#d02020"/><rect x="5.2" y="5.0" width="1.6" height="1.6" fill="#d02020"/><rect x="8.4" y="5.0" width="1.6" height="1.6" fill="#d02020"/><rect x="11.6" y="5.0" width="1.6" height="1.6" fill="#d02020"/><rect x="14.8" y="5.0" width="1.6" height="1.6" fill="#d02020"/><rect x="18.0" y="5.0" width="1.6" height="1.6" fill="#d02020"/><rect x="2.0" y="7.6" width="1.6" height="1.6" fill="#d02020"/><rect x="5.2" y="7.6" width="1.6" height="1.6" fill="#d02020"/><rect x="8.4" y="7.6" width="1.6" height="1.6" fill="#d02020"/><rect x="11.6" y="7.6" width="1.6" height="1.6" fill="#d02020"/><rect x="14.8" y="7.6" width="1.6" height="1.6" fill="#d02020"/><rect x="18.0" y="7.6" width="1.6" height="1.6" fill="#d02020"/><rect x="2.0" y="10.2" width="1.6" height="1.6" fill="#d02020"/><rect x="5.2" y="10.2" width="1.6" height="1.6" fill="#d02020"/><rect x="8.4" y="10.2" width="1.6" height="1.6" fill="#d02020"/><rect x="11.6" y="10.2" width="1.6" height="1.6" fill="#d02020"/><rect x="14.8" y="10.2" width="1.6" height="1.6" fill="#d02020"/><rect x="18.0" y="10.2" width="1.6" height="1.6" fill="#d02020"/><rect x="2.0" y="12.8" width="1.6" height="1.6" fill="#d02020"/><rect x="5.2" y="12.8" width="1.6" height="1.6" fill="#d02020"/><rect x="8.4" y="12.8" width="1.6" height="1.6" fill="#d02020"/><rect x="11.6" y="12.8" width="1.6" height="1.6" fill="#d02020"/><rect x="14.8" y="12.8" width="1.6" height="1.6" fill="#d02020"/><rect x="18.0" y="12.8" width="1.6" height="1.6" fill="#d02020"/><rect x="2.0" y="15.4" width="1.6" height="1.6" fill="#d02020"/><rect x="5.2" y="15.4" width="1.6" height="1.6" fill="#d02020"/><rect x="8.4" y="15.4" width="1.6" height="1.6" fill="#d02020"/><rect x="11.6" y="15.4" width="1.6" height="1.6" fill="#d02020"/><rect x="14.8" y="15.4" width="1.6" height="1.6" fill="#d02020"/><rect x="18.0" y="15.4" width="1.6" height="1.6" fill="#d02020"/><path d="M3.6 4 V18" stroke="#777" stroke-width="0.4"/><path d="M6.8 4 V18" stroke="#777" stroke-width="0.4"/><path d="M10.0 4 V18" stroke="#777" stroke-width="0.4"/><path d="M13.2 4 V18" stroke="#777" stroke-width="0.4"/><path d="M16.4 4 V18" stroke="#777" stroke-width="0.4"/><path d="M19.6 4 V18" stroke="#777" stroke-width="0.4"/></svg>
<div style="top:473.13px;font-size:14.5px;line-height:14.5px;font-weight:700;color:#000;white-space:nowrap;left:-555px;width:1000.00px;text-align:right;letter-spacing:0.12px">Data de Admissão</div>
<div style="left:450px;top:467px;width:170px;height:26px;border:1px solid #7a7a7a;background:#fff;border-top-color:#6e6e6e;"></div>
<div style="top:472.77px;font-size:13.5px;line-height:13.5px;font-weight:400;color:#000;white-space:nowrap;left:452.5px;letter-spacing:-0.2px">01/11/2025</div>
<svg style="position:absolute;left:626px;top:470px" width="21" height="19" viewBox="0 0 21 19"><rect x="0.5" y="0.5" width="20" height="18" fill="#fff" stroke="#111" stroke-width="1"/><rect x="0" y="0" width="21" height="3" fill="#1010e0"/><rect x="2.0" y="5.0" width="1.6" height="1.6" fill="#d02020"/><rect x="5.2" y="5.0" width="1.6" height="1.6" fill="#d02020"/><rect x="8.4" y="5.0" width="1.6" height="1.6" fill="#d02020"/><rect x="11.6" y="5.0" width="1.6" height="1.6" fill="#d02020"/><rect x="14.8" y="5.0" width="1.6" height="1.6" fill="#d02020"/><rect x="18.0" y="5.0" width="1.6" height="1.6" fill="#d02020"/><rect x="2.0" y="7.6" width="1.6" height="1.6" fill="#d02020"/><rect x="5.2" y="7.6" width="1.6" height="1.6" fill="#d02020"/><rect x="8.4" y="7.6" width="1.6" height="1.6" fill="#d02020"/><rect x="11.6" y="7.6" width="1.6" height="1.6" fill="#d02020"/><rect x="14.8" y="7.6" width="1.6" height="1.6" fill="#d02020"/><rect x="18.0" y="7.6" width="1.6" height="1.6" fill="#d02020"/><rect x="2.0" y="10.2" width="1.6" height="1.6" fill="#d02020"/><rect x="5.2" y="10.2" width="1.6" height="1.6" fill="#d02020"/><rect x="8.4" y="10.2" width="1.6" height="1.6" fill="#d02020"/><rect x="11.6" y="10.2" width="1.6" height="1.6" fill="#d02020"/><rect x="14.8" y="10.2" width="1.6" height="1.6" fill="#d02020"/><rect x="18.0" y="10.2" width="1.6" height="1.6" fill="#d02020"/><rect x="2.0" y="12.8" width="1.6" height="1.6" fill="#d02020"/><rect x="5.2" y="12.8" width="1.6" height="1.6" fill="#d02020"/><rect x="8.4" y="12.8" width="1.6" height="1.6" fill="#d02020"/><rect x="11.6" y="12.8" width="1.6" height="1.6" fill="#d02020"/><rect x="14.8" y="12.8" width="1.6" height="1.6" fill="#d02020"/><rect x="18.0" y="12.8" width="1.6" height="1.6" fill="#d02020"/><rect x="2.0" y="15.4" width="1.6" height="1.6" fill="#d02020"/><rect x="5.2" y="15.4" width="1.6" height="1.6" fill="#d02020"/><rect x="8.4" y="15.4" width="1.6" height="1.6" fill="#d02020"/><rect x="11.6" y="15.4" width="1.6" height="1.6" fill="#d02020"/><rect x="14.8" y="15.4" width="1.6" height="1.6" fill="#d02020"/><rect x="18.0" y="15.4" width="1.6" height="1.6" fill="#d02020"/><path d="M3.6 4 V18" stroke="#777" stroke-width="0.4"/><path d="M6.8 4 V18" stroke="#777" stroke-width="0.4"/><path d="M10.0 4 V18" stroke="#777" stroke-width="0.4"/><path d="M13.2 4 V18" stroke="#777" stroke-width="0.4"/><path d="M16.4 4 V18" stroke="#777" stroke-width="0.4"/><path d="M19.6 4 V18" stroke="#777" stroke-width="0.4"/></svg>
<div style="top:503.13px;font-size:14.5px;line-height:14.5px;font-weight:700;color:#a8a8a8;white-space:nowrap;left:-555px;width:1000.00px;text-align:right;">Categoria eSocial</div>
<div style="left:450px;top:497px;width:905px;height:26px;border:1px solid #c4c4c4;background:#cccccc"></div>
<div style="top:503.87px;font-size:13.5px;line-height:13.5px;font-weight:400;color:#8a8a8a;white-space:nowrap;left:454px;letter-spacing:-0.2px">101 - Empregado – Geral</div>
<svg style="position:absolute;left:1338px;top:507px" width="12" height="8" viewBox="0 0 12 8"><path d="M1 1 L5.5 5.5 L10 1" fill="none" stroke="#a8a8a8" stroke-width="1.3"/></svg>
<div style="top:533.13px;font-size:14.5px;line-height:14.5px;font-weight:700;color:#000;white-space:nowrap;left:-555px;width:1000.00px;text-align:right;letter-spacing:0.12px">Categoria do Contrato</div>
<div style="left:450px;top:527px;width:905px;height:26px;border:1px solid #adadad;background:#e1e1e1"></div>
<div style="top:533.87px;font-size:13.5px;line-height:13.5px;font-weight:400;color:#000;white-space:nowrap;left:454px;letter-spacing:-0.2px">01 - Empregado</div>
<svg style="position:absolute;left:1338px;top:537px" width="12" height="8" viewBox="0 0 12 8"><path d="M1 1 L5.5 5.5 L10 1" fill="none" stroke="#404040" stroke-width="1.3"/></svg>
<div style="top:563.13px;font-size:14.5px;line-height:14.5px;font-weight:700;color:#000;white-space:nowrap;left:-555px;width:1000.00px;text-align:right;letter-spacing:0.12px">Sindicato</div>
<div style="left:450px;top:557px;width:170px;height:26px;border:1px solid #7a7a7a;background:#fff;border-top-color:#6e6e6e;"></div>
<div style="top:562.77px;font-size:13.5px;line-height:13.5px;font-weight:400;color:#000;white-space:nowrap;left:-385.5px;width:1000.00px;text-align:right;letter-spacing:-0.2px">1</div>
<div style="left:621px;top:560px;width:21px;height:20px;border:1px solid #b8b8b8;background:#e1e1e1"></div>
<svg style="position:absolute;left:623px;top:572px" width="17" height="4" viewBox="0 0 17 4"><rect x="3.5" y="1.5" width="1.6" height="1.6" fill="#222"/><rect x="7.7" y="1.5" width="1.6" height="1.6" fill="#222"/><rect x="11.9" y="1.5" width="1.6" height="1.6" fill="#222"/></svg>
<div style="left:644px;top:557px;width:483px;height:26px;border:1px solid #7a7a7a;background:#fff;border-top-color:#6e6e6e;"></div>
<div style="top:562.77px;font-size:13.5px;line-height:13.5px;font-weight:400;color:#000;white-space:nowrap;left:646.5px;letter-spacing:-0.2px">Sindicato dos Funcionarios</div>
<div style="top:593.13px;font-size:14.5px;line-height:14.5px;font-weight:700;color:#000;white-space:nowrap;left:-555px;width:1000.00px;text-align:right;letter-spacing:0.12px">Dias de Contrato</div>
<div style="left:450px;top:587px;width:170px;height:26px;border:1px solid #7a7a7a;background:#fff;border-top-color:#6e6e6e;"></div>
<div style="top:592.77px;font-size:13.5px;line-height:13.5px;font-weight:400;color:#000;white-space:nowrap;left:-385.5px;width:1000.00px;text-align:right;letter-spacing:-0.2px">0</div>
<div style="left:647px;top:587px;width:169px;height:26px;border:1px solid #d4d4d4;background:#fff;border-top-color:#d4d4d4;"></div>
<svg style="position:absolute;left:822px;top:590px" width="21" height="19" viewBox="0 0 21 19"><rect x="0.5" y="0.5" width="20" height="18" fill="#eee" stroke="#9a9a9a" stroke-width="1"/><rect x="0" y="0" width="21" height="3" fill="#9a9a9a"/><path d="M3.6 3 V18" stroke="#9a9a9a" stroke-width="0.8"/><path d="M6.8 3 V18" stroke="#9a9a9a" stroke-width="0.8"/><path d="M10.0 3 V18" stroke="#9a9a9a" stroke-width="0.8"/><path d="M13.2 3 V18" stroke="#9a9a9a" stroke-width="0.8"/><path d="M16.4 3 V18" stroke="#9a9a9a" stroke-width="0.8"/><path d="M19.6 3 V18" stroke="#9a9a9a" stroke-width="0.8"/><path d="M0 5.0 H21" stroke="#9a9a9a" stroke-width="0.8"/><path d="M0 7.8 H21" stroke="#9a9a9a" stroke-width="0.8"/><path d="M0 10.6 H21" stroke="#9a9a9a" stroke-width="0.8"/><path d="M0 13.4 H21" stroke="#9a9a9a" stroke-width="0.8"/><path d="M0 16.2 H21" stroke="#9a9a9a" stroke-width="0.8"/></svg>
<div style="top:623.13px;font-size:14.5px;line-height:14.5px;font-weight:700;color:#000;white-space:nowrap;left:-555px;width:1000.00px;text-align:right;letter-spacing:0.12px">Dias de Prorrogação</div>
<div style="left:450px;top:617px;width:170px;height:26px;border:1px solid #7a7a7a;background:#fff;border-top-color:#6e6e6e;"></div>
<div style="top:622.77px;font-size:13.5px;line-height:13.5px;font-weight:400;color:#000;white-space:nowrap;left:-385.5px;width:1000.00px;text-align:right;letter-spacing:-0.2px">0</div>
<div style="left:647px;top:617px;width:169px;height:26px;border:1px solid #d4d4d4;background:#fff;border-top-color:#d4d4d4;"></div>
<svg style="position:absolute;left:822px;top:620px" width="21" height="19" viewBox="0 0 21 19"><rect x="0.5" y="0.5" width="20" height="18" fill="#eee" stroke="#9a9a9a" stroke-width="1"/><rect x="0" y="0" width="21" height="3" fill="#9a9a9a"/><path d="M3.6 3 V18" stroke="#9a9a9a" stroke-width="0.8"/><path d="M6.8 3 V18" stroke="#9a9a9a" stroke-width="0.8"/><path d="M10.0 3 V18" stroke="#9a9a9a" stroke-width="0.8"/><path d="M13.2 3 V18" stroke="#9a9a9a" stroke-width="0.8"/><path d="M16.4 3 V18" stroke="#9a9a9a" stroke-width="0.8"/><path d="M19.6 3 V18" stroke="#9a9a9a" stroke-width="0.8"/><path d="M0 5.0 H21" stroke="#9a9a9a" stroke-width="0.8"/><path d="M0 7.8 H21" stroke="#9a9a9a" stroke-width="0.8"/><path d="M0 10.6 H21" stroke="#9a9a9a" stroke-width="0.8"/><path d="M0 13.4 H21" stroke="#9a9a9a" stroke-width="0.8"/><path d="M0 16.2 H21" stroke="#9a9a9a" stroke-width="0.8"/></svg>
<div style="top:653.13px;font-size:14.5px;line-height:14.5px;font-weight:700;color:#000;white-space:nowrap;left:-555px;width:1000.00px;text-align:right;letter-spacing:0.12px">Fato - Prazo Determinado</div>
<div style="left:450px;top:647px;width:170px;height:26px;border:1px solid #7a7a7a;background:#fff;border-top-color:#6e6e6e;"></div>
<div style="top:652.77px;font-size:13.5px;line-height:13.5px;font-weight:400;color:#000;white-space:nowrap;left:-385.5px;width:1000.00px;text-align:right;letter-spacing:-0.2px">0</div>
<div style="left:621px;top:650px;width:21px;height:20px;border:1px solid #b8b8b8;background:#e1e1e1"></div>
<svg style="position:absolute;left:623px;top:662px" width="17" height="4" viewBox="0 0 17 4"><rect x="3.5" y="1.5" width="1.6" height="1.6" fill="#222"/><rect x="7.7" y="1.5" width="1.6" height="1.6" fill="#222"/><rect x="11.9" y="1.5" width="1.6" height="1.6" fill="#222"/></svg>
<div style="left:644px;top:647px;width:708px;height:26px;border:1px solid #7a7a7a;background:#fff;border-top-color:#6e6e6e;"></div>
<div style="top:652.77px;font-size:13.5px;line-height:13.5px;font-weight:400;color:#000;white-space:nowrap;left:646.5px;letter-spacing:-0.2px">Não é Fato</div>
<div style="top:683.13px;font-size:14.5px;line-height:14.5px;font-weight:700;color:#000;white-space:nowrap;left:-555px;width:1000.00px;text-align:right;letter-spacing:0.12px">Cargo</div>
<div style="left:450px;top:677px;width:170px;height:26px;border:1px solid #7a7a7a;background:#fff;border-top-color:#6e6e6e;"></div>
<div style="top:682.77px;font-size:13.5px;line-height:13.5px;font-weight:400;color:#000;white-space:nowrap;left:-385.5px;width:1000.00px;text-align:right;letter-spacing:-0.2px">2</div>
<div style="left:621px;top:680px;width:21px;height:20px;border:1px solid #b8b8b8;background:#e1e1e1"></div>
<svg style="position:absolute;left:623px;top:692px" width="17" height="4" viewBox="0 0 17 4"><rect x="3.5" y="1.5" width="1.6" height="1.6" fill="#222"/><rect x="7.7" y="1.5" width="1.6" height="1.6" fill="#222"/><rect x="11.9" y="1.5" width="1.6" height="1.6" fill="#222"/></svg>
<div style="left:643px;top:677px;width:710px;height:26px;border:1px solid #3a8ad8;background:#fff;border-top-color:#3a8ad8;box-shadow:0 1px 5px 1px rgba(60,110,180,0.5);border-width:2px;"></div>
<div style="top:682.77px;font-size:13.5px;line-height:13.5px;font-weight:400;color:#000;white-space:nowrap;left:645.5px;letter-spacing:-0.2px">Professor</div>
<div style="top:714.40px;font-size:13px;line-height:13px;font-weight:400;color:#a8a8a8;white-space:nowrap;left:-555px;width:1000.00px;text-align:right;">Tabela Salarial</div>
<div style="left:450px;top:707px;width:170px;height:26px;border:1px solid #d4d4d4;background:#fff;border-top-color:#d4d4d4;"></div>
<div style="left:621px;top:710px;width:21px;height:20px;border:1px solid #d0d0d0;background:#d0d0d0"></div>
<svg style="position:absolute;left:623px;top:722px" width="17" height="4" viewBox="0 0 17 4"><rect x="3.5" y="1.5" width="1.6" height="1.6" fill="#a8a8a8"/><rect x="7.7" y="1.5" width="1.6" height="1.6" fill="#a8a8a8"/><rect x="11.9" y="1.5" width="1.6" height="1.6" fill="#a8a8a8"/></svg>
<div style="left:644px;top:707px;width:483px;height:26px;border:1px solid #d4d4d4;background:#fff;border-top-color:#d4d4d4;"></div>
<div style="top:743.13px;font-size:14.5px;line-height:14.5px;font-weight:700;color:#000;white-space:nowrap;left:-555px;width:1000.00px;text-align:right;letter-spacing:0.12px">Tipo Salário</div>
<div style="left:450px;top:737px;width:170px;height:26px;border:1px solid #adadad;background:#e1e1e1"></div>
<div style="top:743.87px;font-size:13.5px;line-height:13.5px;font-weight:400;color:#000;white-space:nowrap;left:454px;letter-spacing:-0.2px">Aula</div>
<svg style="position:absolute;left:603px;top:747px" width="12" height="8" viewBox="0 0 12 8"><path d="M1 1 L5.5 5.5 L10 1" fill="none" stroke="#404040" stroke-width="1.3"/></svg>
<div style="top:773.13px;font-size:14.5px;line-height:14.5px;font-weight:700;color:#000;white-space:nowrap;left:-555px;width:1000.00px;text-align:right;letter-spacing:0.12px">Valor Salário</div>
<div style="left:450px;top:767px;width:170px;height:26px;border:1px solid #7a7a7a;background:#fff;border-top-color:#6e6e6e;"></div>
<div style="top:772.77px;font-size:13.5px;line-height:13.5px;font-weight:400;color:#000;white-space:nowrap;left:-385.5px;width:1000.00px;text-align:right;letter-spacing:-0.2px">0,00</div>
<div style="top:804.40px;font-size:13px;line-height:13px;font-weight:400;color:#1a1a2a;white-space:nowrap;left:-555px;width:1000.00px;text-align:right;">Complemento Salário</div>
<div style="left:450px;top:797px;width:170px;height:26px;border:1px solid #7a7a7a;background:#fff;border-top-color:#6e6e6e;"></div>
<div style="top:802.77px;font-size:13.5px;line-height:13.5px;font-weight:400;color:#000;white-space:nowrap;left:-385.5px;width:1000.00px;text-align:right;letter-spacing:-0.2px">0,00</div>
<div style="top:834.40px;font-size:13px;line-height:13px;font-weight:400;color:#1a1a2a;white-space:nowrap;left:-555px;width:1000.00px;text-align:right;">Antecipação Salário</div>
<div style="left:450px;top:827px;width:170px;height:26px;border:1px solid #7a7a7a;background:#fff;border-top-color:#6e6e6e;"></div>
<div style="top:832.77px;font-size:13.5px;line-height:13.5px;font-weight:400;color:#000;white-space:nowrap;left:-385.5px;width:1000.00px;text-align:right;letter-spacing:-0.2px">0,00</div>
<div style="top:864.40px;font-size:13px;line-height:13px;font-weight:400;color:#a8a8a8;white-space:nowrap;left:-555px;width:1000.00px;text-align:right;">Salário Carnê</div>
<div style="left:450px;top:857px;width:170px;height:26px;border:1px solid #d4d4d4;background:#fff;border-top-color:#d4d4d4;"></div>
<div style="top:862.77px;font-size:13.5px;line-height:13.5px;font-weight:400;color:#a8a8a8;white-space:nowrap;left:-385.5px;width:1000.00px;text-align:right;letter-spacing:-0.2px">0,00</div>
<div style="top:894.40px;font-size:13px;line-height:13px;font-weight:400;color:#1a1a2a;white-space:nowrap;left:-555px;width:1000.00px;text-align:right;">Descrição Salário</div>
<div style="left:450px;top:887px;width:905px;height:26px;border:1px solid #7a7a7a;background:#fff;border-top-color:#6e6e6e;"></div>
<div style="left:258px;top:917px;width:1610px;height:2px;overflow:hidden"><div style="left:192px;top:0;width:170px;height:26px;border:1px solid #d4d4d4"></div><div style="left:386px;top:0;width:483px;height:26px;border:1px solid #d4d4d4"></div></div>
<div style="left:315px;top:286px;width:817px;height:30px;border:4px solid #ff8000;border-radius:3px"></div>
<div style="left:348px;top:735px;width:276px;height:31px;border:4px solid #ff8000;border-radius:3px"></div>
</body></html>
